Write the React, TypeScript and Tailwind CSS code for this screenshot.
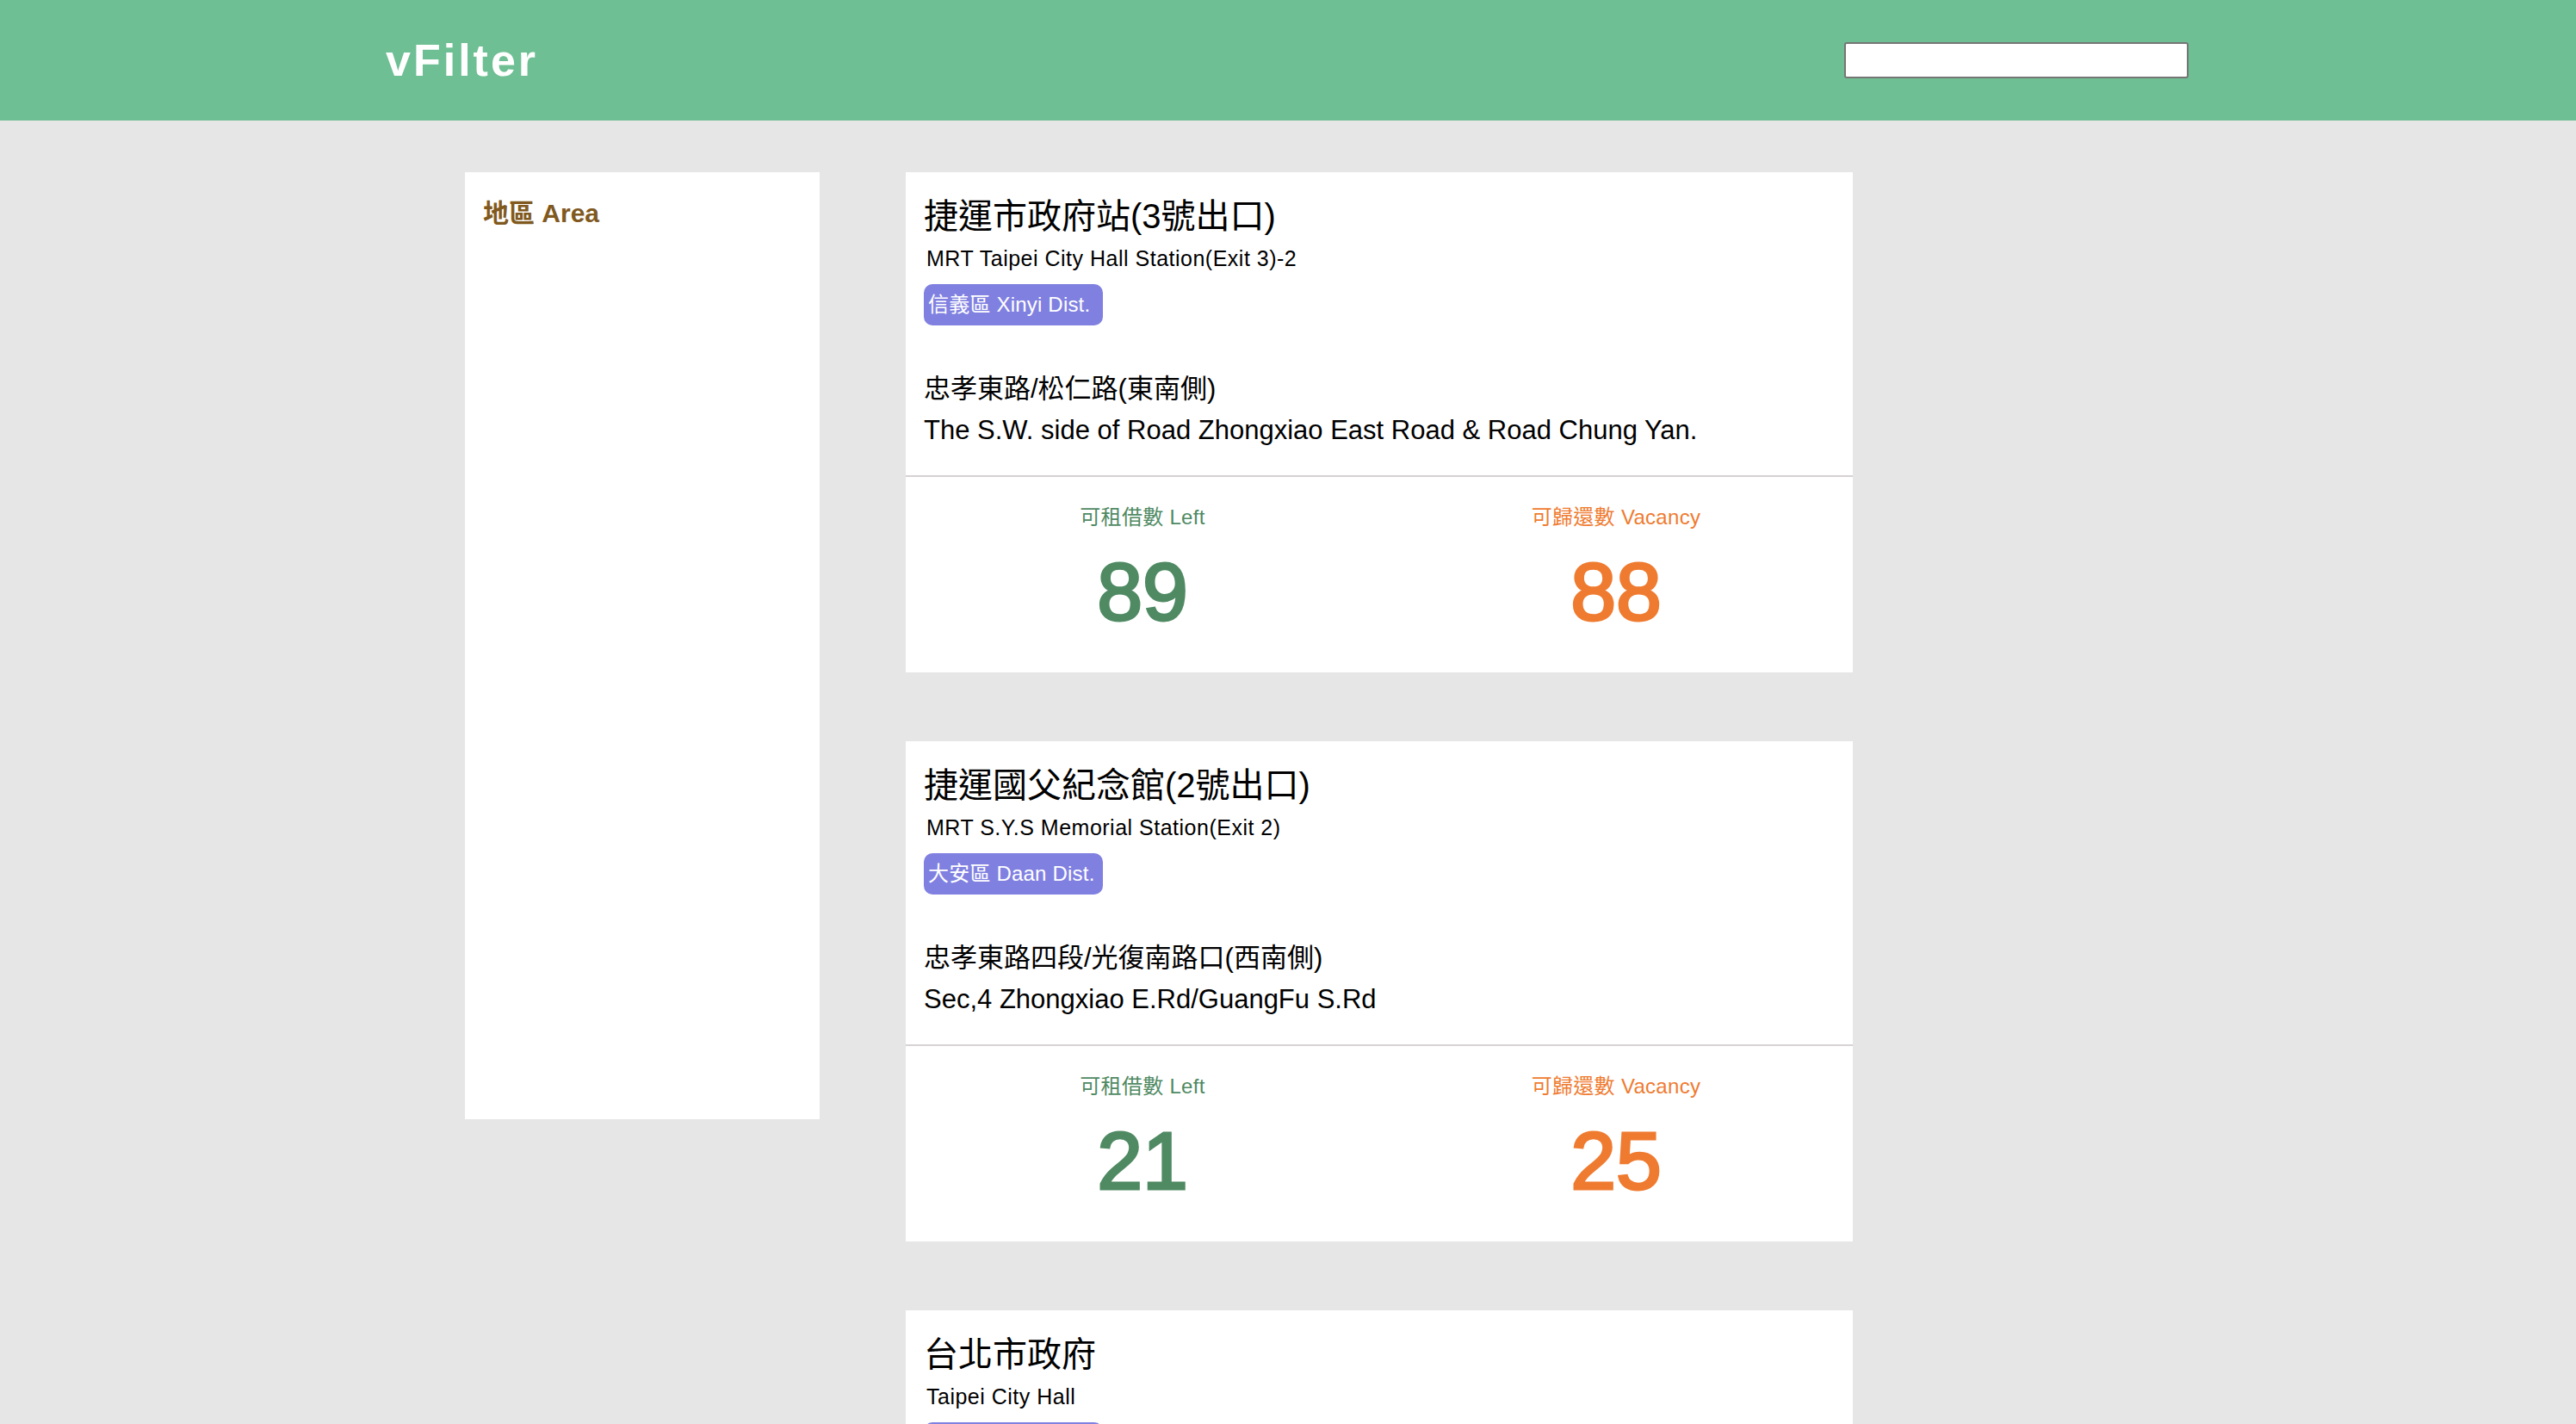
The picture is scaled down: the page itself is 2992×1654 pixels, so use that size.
import React from 'react';

type Station = {
  name: string;
  nameEn: string;
  area: string;
  address: string;
  addressEn: string;
  left: number;
  vacancy: number;
};

const stations: Station[] = [
  {
    name: '捷運市政府站(3號出口)',
    nameEn: 'MRT Taipei City Hall Station(Exit 3)-2',
    area: '信義區 Xinyi Dist.',
    address: '忠孝東路/松仁路(東南側)',
    addressEn: 'The S.W. side of Road Zhongxiao East Road & Road Chung Yan.',
    left: 89,
    vacancy: 88,
  },
  {
    name: '捷運國父紀念館(2號出口)',
    nameEn: 'MRT S.Y.S Memorial Station(Exit 2)',
    area: '大安區 Daan Dist.',
    address: '忠孝東路四段/光復南路口(西南側)',
    addressEn: 'Sec,4 Zhongxiao E.Rd/GuangFu S.Rd',
    left: 21,
    vacancy: 25,
  },
  {
    name: '台北市政府',
    nameEn: 'Taipei City Hall',
    area: '信義區 Xinyi Dist.',
    address: '市府路45號(市府廣場)',
    addressEn: 'No.45, Shifu Rd.',
    left: 12,
    vacancy: 168,
  },
];

const font = { fontFamily: '"Liberation Sans", "Noto Sans CJK TC", sans-serif' };

const StationCard = ({ s }: { s: Station }) => (
  <div className="bg-white w-[1100px]">
    <div className="pl-[21px] pr-[21px] pt-[20px] pb-[28px] border-b-2 border-[#d7d2d4]">
      <h2 className="text-[40px] leading-[62px] text-black">{s.name}</h2>
      <p className="ml-[3px] text-[25px] tracking-[0.5px] leading-[36px] text-black">{s.nameEn}</p>
      <div className="mt-[12px] w-[208px] h-[48px] leading-[48px] pl-[5px] rounded-[10px] bg-[#8080e1] text-white text-[24px] tracking-[0.2px] whitespace-nowrap">
        {s.area}
      </div>
      <div className="mt-[50px] text-[31px] leading-[48px] text-black">
        <p>{s.address}</p>
        <p>{s.addressEn}</p>
      </div>
    </div>
    <div className="grid grid-cols-2 pt-[30px] pb-[46px] text-center">
      <div className="text-[#4f8a63]">
        <p className="text-[24px] leading-[34px] tracking-[0.3px]">可租借數 Left</p>
        <p className="mt-[22px] text-[95px] leading-[95px] [-webkit-text-stroke:3px_currentColor]">{s.left}</p>
      </div>
      <div className="text-[#ef7b30]">
        <p className="text-[24px] leading-[34px] tracking-[0.3px]">可歸還數 Vacancy</p>
        <p className="mt-[22px] text-[95px] leading-[95px] [-webkit-text-stroke:3px_currentColor]">{s.vacancy}</p>
      </div>
    </div>
  </div>
);

export default function App() {
  return (
    <div className="min-h-screen bg-[#e6e6e6]" style={font}>
      <header className="h-[140px] bg-[#6ebf93] flex items-center justify-between pl-[448px] pr-[450px]">
        <h1 className="text-[52px] font-bold tracking-[3px] text-white">vFilter</h1>
        <input
          type="text"
          className="w-[400px] h-[42px] bg-white border-2 border-[#767676] rounded-[3px] outline-none"
        />
      </header>
      <main className="flex items-start gap-[100px] pl-[540px] pt-[60px] pb-[80px]">
        <aside className="w-[412px] h-[1100px] bg-white pl-[21px] pt-[21px]">
          <h3 className="text-[30px] leading-[54px] font-bold text-[#80591e]">地區 Area</h3>
        </aside>
        <div className="flex flex-col gap-[80px]">
          {stations.map((s) => (
            <StationCard key={s.name} s={s} />
          ))}
        </div>
      </main>
    </div>
  );
}
